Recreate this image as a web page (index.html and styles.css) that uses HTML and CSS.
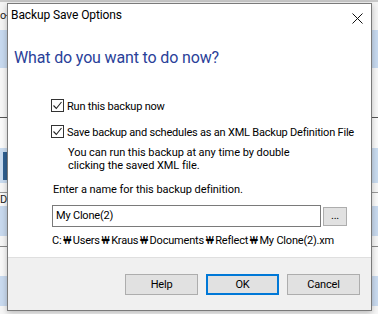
FILE: index.html
```html
<!DOCTYPE html>
<html>
<head>
<meta charset="utf-8">
<link rel="stylesheet" href="styles.css">
</head>
<body>
<div class="backdrop">
  <div class="band b1"><span class="bt">o-</span></div>
  <div class="band b2"></div>
  <div class="band b3"></div>
  <div class="band b4"></div>
  <div class="band b5"><span class="icon"></span></div>
  <div class="band b6"></div>
  <div class="band b7"><span class="bt">D</span></div>
  <div class="band b8"></div>
  <div class="band b9"></div>
  <div class="band b10"></div>
  <div class="band b11"></div>
  <div class="band b12"></div>
</div>
<div class="dialog">
  <div class="titlebar">
    <span class="title">Backup Save Options</span>
    <svg class="close" width="11" height="11" viewBox="0 0 11 11"><path d="M0.5 0.5 L10.5 10.5 M10.5 0.5 L0.5 10.5" stroke="#111" stroke-width="1" fill="none"/></svg>
  </div>
  <div class="body">
    <h1 class="heading">What do you want to do now?</h1>
    <div class="options">
      <label class="check"><span class="box"><svg width="11" height="11" viewBox="0 0 11 11"><path d="M1.5 5.5 L4.3 8.5 L9.5 2" stroke="#222" stroke-width="1.1" fill="none"/></svg></span>Run this backup now</label>
      <label class="check second"><span class="box"><svg width="11" height="11" viewBox="0 0 11 11"><path d="M1.5 5.5 L4.3 8.5 L9.5 2" stroke="#222" stroke-width="1.1" fill="none"/></svg></span>Save backup and schedules as an XML Backup Definition File</label>
      <p class="desc">You can run this backup at any time by double<br>clicking the saved XML file.</p>
    </div>
    <p class="prompt">Enter a name for this backup definition.</p>
    <div class="namerow">
      <div class="input">My Clone(2)</div>
      <div class="browse">...</div>
    </div>
    <p class="path">C:<span class="won">₩</span>Users<span class="won">₩</span>Kraus<span class="won">₩</span>Documents<span class="won">₩</span>Reflect<span class="won">₩</span>My Clone(2).xm</p>
  </div>
  <div class="footer">
    <div class="btn">Help</div>
    <div class="btn default">OK</div>
    <div class="btn">Cancel</div>
  </div>
</div>
</body>
</html>
```
FILE: styles.css
```css
html, body {
  margin: 0;
  padding: 0;
}
body {
  width: 378px;
  height: 314px;
  overflow: hidden;
  position: relative;
  font-family: Roboto, "Noto Sans CJK KR", sans-serif;
  font-size: 11px;
  letter-spacing: -0.2px;
  color: #000;
  background: #fff;
}
.backdrop {
  display: flex;
  flex-direction: column;
  height: 314px;
}
.band {
  flex: none;
  font-size: 11px;
  line-height: 12px;
  display: flex;
  align-items: center;
}
.bt { color: #222; }
.b1 { height: 30px; background: #f4f4f4; border-top: 2px solid #c8c8c8; box-sizing: border-box; }
.b2 { height: 38px; background: #c7d9ef; }
.b3 { height: 49px; background: #f7f7f7; border-bottom: 1px solid #555; }
.b4 { height: 30px; background: #fafafa; }
.b5 { height: 35px; background: #c9dbef; }
.b5 .icon { width: 5px; height: 28px; background: #2f5f90; margin-left: 3px; }
.b6 { height: 9px; background: #f6f6f6; border-bottom: 1px solid #999; }
.b7 { height: 13px; background: #fafafa; }
.b8 { height: 30px; background: #c8d9ee; }
.b9 { height: 10px; background: #f6f6f6; border-bottom: 1px solid #888; }
.b10 { height: 29px; background: #f8f8f8; }
.b11 { height: 30px; background: #c9daef; }
.b12 { height: 10px; background: #f6f6f6; }

.dialog {
  position: absolute;
  left: 7px;
  top: 3px;
  width: 365px;
  height: 308px;
  box-sizing: border-box;
  border: 1px solid #7a7a7a;
  background: #fff;
  display: flex;
  flex-direction: column;
  box-shadow: 0 2px 6px rgba(0,0,0,0.25);
  white-space: nowrap;
}
.titlebar {
  height: 28px;
  flex: none;
  display: flex;
  align-items: flex-start;
  justify-content: space-between;
  padding: 4px 8px 0 3px;
  box-sizing: border-box;
}
.title {
  font-size: 12px;
  letter-spacing: -0.1px;
  line-height: 14px;
  color: #000;
}
.close { margin-top: 5px; }
.body {
  flex: 1;
  padding: 0 0 0 6px;
  border-bottom: 1px solid #dfdfdf;
}
.heading {
  margin: 16px 0 0 0;
  font-size: 16px;
  letter-spacing: -0.15px;
  font-weight: normal;
  color: #2a4199;
  line-height: 20px;
}
.options {
  margin: 32px 0 0 37px;
}
.check {
  display: flex;
  align-items: flex-start;
  height: 14px;
  line-height: 14px;
}
.check.second { margin-top: 12px; }
.box {
  width: 11px;
  height: 11px;
  border: 1px solid #333;
  margin: -1px 3px 0 0;
  display: flex;
  align-items: center;
  justify-content: center;
  background: #fff;
}
.desc {
  margin: 6px 0 0 17px;
  line-height: 13px;
  letter-spacing: -0.05px;
}
.prompt {
  margin: 11px 0 0 39px;
  line-height: 14px;
  letter-spacing: -0.05px;
}
.namerow {
  display: flex;
  align-items: flex-start;
  margin: 8px 0 0 38px;
}
.input {
  width: 269px;
  height: 22px;
  box-sizing: border-box;
  border: 1px solid #7a7a7a;
  padding: 0 0 0 3px;
  line-height: 20px;
}
.browse {
  width: 24px;
  height: 19px;
  box-sizing: border-box;
  margin: 2px 0 0 2px;
  border: 1px solid #adadad;
  background: #e1e1e1;
  text-align: center;
  line-height: 15px;
}
.path {
  margin: 7px 0 0 38px;
  line-height: 14px;
}
.won {
  margin: 0 1.7px;
}
.footer {
  height: 52px;
  flex: none;
  background: #f0f0f0;
  display: flex;
  justify-content: flex-end;
  align-items: flex-start;
  gap: 8px;
  padding: 16px 11px 0 0;
  box-sizing: border-box;
}
.btn {
  width: 73px;
  height: 21px;
  box-sizing: border-box;
  border: 1px solid #adadad;
  background: #e1e1e1;
  text-align: center;
  line-height: 19px;
}
.btn.default {
  border: 2px solid #0078d7;
  line-height: 17px;
}
```
